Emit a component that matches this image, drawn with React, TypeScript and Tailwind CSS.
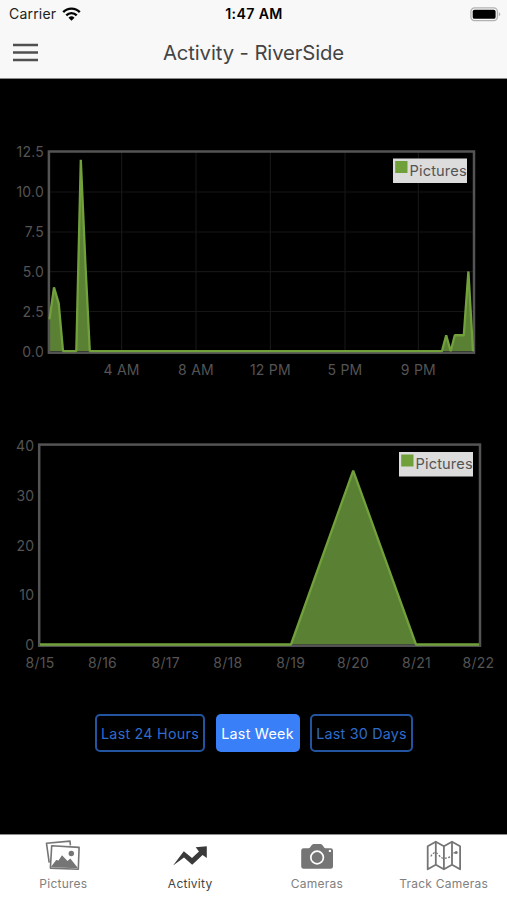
import React from 'react';

type Point = [number, number];

interface Tick {
  at: number;
  label: string;
}

interface ActivityChartProps {
  viewBox: string;
  height: string;
  frame: { left: number; top: number; right: number; bottom: number };
  baseline: number;
  unit: number;
  points: Point[];
  xTicks: Tick[];
  yTicks: Tick[];
  xLabelY: number;
  grid?: boolean;
  legend: { x: number; y: number };
}

const dayPoints: Point[] = [
  [49.5, 2], [54, 4], [58.7, 3], [63, 0], [76.3, 0], [80.8, 12], [85.4, 5.5], [89.8, 0],
  [441.9, 0], [446.2, 1], [450.7, 0], [454.8, 1], [463.8, 1], [468.4, 5], [473, 0],
];

const weekPoints: Point[] = [
  [40, 0], [291, 0], [353.2, 35], [416, 0], [479, 0],
];

const dayX: Tick[] = [
  { at: 121.6, label: '4 AM' },
  { at: 196, label: '8 AM' },
  { at: 270.4, label: '12 PM' },
  { at: 345, label: '5 PM' },
  { at: 418.4, label: '9 PM' },
];

const dayY: Tick[] = [
  { at: 152, label: '12.5' },
  { at: 192, label: '10.0' },
  { at: 232, label: '7.5' },
  { at: 271.6, label: '5.0' },
  { at: 311.5, label: '2.5' },
  { at: 351.5, label: '0.0' },
];

const weekX: Tick[] = [
  { at: 40, label: '8/15' },
  { at: 102.5, label: '8/16' },
  { at: 165.7, label: '8/17' },
  { at: 227.8, label: '8/18' },
  { at: 290.7, label: '8/19' },
  { at: 353, label: '8/20' },
  { at: 416.5, label: '8/21' },
  { at: 478.5, label: '8/22' },
];

const weekY: Tick[] = [
  { at: 445.5, label: '40' },
  { at: 495.5, label: '30' },
  { at: 545.5, label: '20' },
  { at: 594.5, label: '10' },
  { at: 644.5, label: '0' },
];

function ActivityChart({ viewBox, height, frame, baseline, unit, points, xTicks, yTicks, xLabelY, grid, legend }: ActivityChartProps) {
  const coords = points.map(([x, v]) => `${x},${baseline - v * unit}`).join(' ');
  const { left, top, right, bottom } = frame;

  return (
    <svg className={`block w-full ${height}`} viewBox={viewBox} fontSize="14" letterSpacing="0.25">
      {grid && (
        <g stroke="#151515" strokeWidth="1.2">
          {xTicks.map((t) => <line key={t.label} x1={t.at} x2={t.at} y1={top} y2={bottom} />)}
          {yTicks.slice(1, -1).map((t) => <line key={t.label} x1={left} x2={right} y1={t.at} y2={t.at} />)}
        </g>
      )}
      <polygon points={`${points[0][0]},${baseline} ${coords}`} fill="#5a8033" />
      <rect x={left} y={top} width={right - left} height={bottom - top} fill="none" stroke="#545454" strokeWidth="2.5" />
      <polyline points={coords} fill="none" stroke="#72a13c" strokeWidth="2.3" strokeLinejoin="bevel" />
      <g fill="#545454">
        {yTicks.map((t) => (
          <text key={t.label} x={left - 4.8} y={t.at + 5} textAnchor="end">{t.label}</text>
        ))}
        {xTicks.map((t) => (
          <text key={t.label} x={t.at} y={xLabelY} textAnchor="middle">{t.label}</text>
        ))}
      </g>
      <rect x={legend.x} y={legend.y} width="74" height="24.5" fill="#dcdcdc" />
      <rect x={legend.x + 2.2} y={legend.y + 2.5} width="12.3" height="12" fill="#6fa03a" />
      <text x={legend.x + 16.6} y={legend.y + 17.3} fill="#545454" fontSize="14.6" letterSpacing="0" textLength="57" lengthAdjust="spacing">Pictures</text>
    </svg>
  );
}

function PicturesIcon() {
  return (
    <svg className="w-9 h-8" viewBox="0 0 36 32" fill="none" stroke="#757575" strokeWidth="1.6" strokeLinejoin="round">
      <path d="M4.2 22.6 1.5 3.3 25 1.1 25.4 5.4" />
      <path d="M6.7 5.8 34.1 7.4 33.3 29.3 5.4 28.1Z" />
      <path d="M6.2 26.4 11.2 20.1 13.5 20.5 17 15.2 22.5 21.1 25.3 18.5 32.5 27.5 32.4 28.3 6.2 27.2Z" fill="#757575" stroke="none" />
      <circle cx="26.3" cy="13.5" r="2.7" fill="#757575" stroke="none" />
    </svg>
  );
}

function ActivityIcon() {
  return (
    <svg className="w-9 h-8" viewBox="0 0 36 32" fill="#3a3a3a">
      <path d="M1.1 25.6 11.8 11.2 20 18 27 11.4 23.7 7.2 34.8 6.3 34.8 18.1 30.6 14.9 20.2 24.7 12 17.4Z" />
    </svg>
  );
}

function CameraIcon() {
  return (
    <svg className="w-9 h-8" viewBox="0 0 36 32">
      <path d="M4.6 8.2h5.2c1.8 0 2.6-4.2 4.8-4.2h7c2.2 0 3 4.2 4.8 4.2h5.2a2.4 2.4 0 0 1 2.4 2.4v15.8a2.4 2.4 0 0 1-2.4 2.4H4.6a2.4 2.4 0 0 1-2.4-2.4V10.6a2.4 2.4 0 0 1 2.4-2.4Z" fill="#757575" />
      <circle cx="18.1" cy="17.5" r="6.3" fill="none" stroke="#fff" strokeWidth="1.7" />
      <circle cx="30.9" cy="10.9" r="1.2" fill="#fff" />
    </svg>
  );
}

function MapIcon() {
  return (
    <svg className="w-9 h-8" viewBox="0 0 36 32" fill="none" stroke="#757575" strokeWidth="1.8" strokeLinejoin="round">
      <path d="M1.7 6.3 9.8 1.7 17.9 6.3 26 1.7 34.1 6.3V29.3L26 24.7 17.9 29.3 9.8 24.7 1.7 29.3Z" />
      <path d="M9.8 1.7v23M17.9 6.3v23M26 1.7v23" />
      <path d="M4.8 16.5C7.5 12 10 11.5 12.3 14.5S16.5 18.8 19.5 18.2 25 17 26.5 14.5 29 12.7 30.5 12.7" strokeWidth="1.2" strokeDasharray="2 1.5" />
      <circle cx="30.2" cy="12.6" r="1.5" fill="#757575" stroke="none" />
    </svg>
  );
}

const tabs = [
  { label: 'Pictures', icon: PicturesIcon },
  { label: 'Activity', icon: ActivityIcon, active: true },
  { label: 'Cameras', icon: CameraIcon },
  { label: 'Track Cameras', icon: MapIcon },
];

function StatusBar() {
  return (
    <div className="grid h-7 grid-cols-3 items-center pl-[7px] pr-[6px] text-[14px] leading-none text-[#222]">
      <div className="flex items-center gap-[6px] pl-[2px]">
        <span className="tracking-[0.2px]">Carrier</span>
        <svg className="h-[14px] w-[19px]" viewBox="0 0 19 14" fill="none" stroke="#050505" strokeWidth="2.4">
          <path d="M1.2 5.1a11.7 11.7 0 0 1 16.6 0" />
          <path d="M4.3 8.3a7.3 7.3 0 0 1 10.4 0" />
          <path d="M9.5 13.8 6.5 10.8a4.3 4.3 0 0 1 6 0Z" fill="#050505" stroke="none" />
        </svg>
      </div>
      <span className="pt-px text-center text-[14.2px] font-semibold tracking-[0.35px] text-black">1:47 AM</span>
      <svg className="h-[15px] w-[31px] justify-self-end" viewBox="0 0 31 15">
        <rect x="0.9" y="0.9" width="26.5" height="12.7" rx="3.7" fill="#f8f8f8" stroke="#b2b2b2" strokeWidth="1.3" />
        <rect x="2.7" y="2.7" width="22.9" height="9.1" rx="1.9" fill="#000" />
        <path d="M28.8 5v4.5a2.5 2.5 0 0 0 0-4.5Z" fill="#b2b2b2" />
      </svg>
    </div>
  );
}

export default function App() {
  return (
    <div className="flex h-[900px] w-[507px] flex-col overflow-hidden bg-black font-['Inter','Liberation_Sans',sans-serif]">
      <header className="h-[79px] shrink-0 border-b border-[#8c8c8c] bg-[#f8f8f8]">
        <StatusBar />
        <div className="grid h-[49px] grid-cols-[60px_1fr_60px] items-center">
          <svg className="ml-[13px] h-[19px] w-[25px]" viewBox="0 0 25 19" stroke="#505050" strokeWidth="2.5">
            <path d="M0 2h25M0 9.5h25M0 17h25" />
          </svg>
          <h1 className="pt-0.5 text-center text-[20.3px] leading-none tracking-[-0.1px] text-[#444]">Activity - RiverSide</h1>
        </div>
      </header>

      <main className="flex flex-1 flex-col pt-[61px]">
        <ActivityChart
          viewBox="0 140 507 250"
          height="h-[250px]"
          frame={{ left: 48.9, top: 151.5, right: 474, bottom: 352.7 }}
          baseline={351.2}
          unit={15.95}
          points={dayPoints}
          xTicks={dayX}
          yTicks={dayY}
          xLabelY={375}
          grid
          legend={{ x: 393, y: 158.5 }}
        />
        <ActivityChart
          viewBox="0 390 507 310"
          height="h-[310px]"
          frame={{ left: 39.2, top: 444.6, right: 480, bottom: 645.7 }}
          baseline={644.5}
          unit={4.97}
          points={weekPoints}
          xTicks={weekX}
          yTicks={weekY}
          xLabelY={667.5}
          legend={{ x: 399, y: 452 }}
        />
        <div className="mt-[14px] ml-[95px] flex h-[38px] gap-[10.5px] text-[14.3px] whitespace-nowrap">
          <button className="w-[110px] rounded-[5px] border-2 border-[#2354a0] pt-0.5 tracking-[0.25px] text-[#2e6ccc]">Last 24 Hours</button>
          <button className="w-[84px] rounded-[5px] bg-[#397ff7] pt-0.5 tracking-[0.25px] text-white">Last Week</button>
          <button className="w-[103px] rounded-[5px] border-2 border-[#2354a0] pt-0.5 tracking-[0.2px] text-[#2e6ccc]">Last 30 Days</button>
        </div>
      </main>

      <nav className="grid h-[66px] shrink-0 grid-cols-4 border-t border-[#8c8c8c] bg-white">
        {tabs.map(({ label, icon: Icon, active }) => (
          <div key={label} className={`flex flex-col items-center pt-[5px] text-[12px] leading-none tracking-[0.25px] ${active ? 'text-[#444]' : 'text-[#808080]'}`}>
            <Icon />
            <span className="mt-[6px]">{label}</span>
          </div>
        ))}
      </nav>
    </div>
  );
}
